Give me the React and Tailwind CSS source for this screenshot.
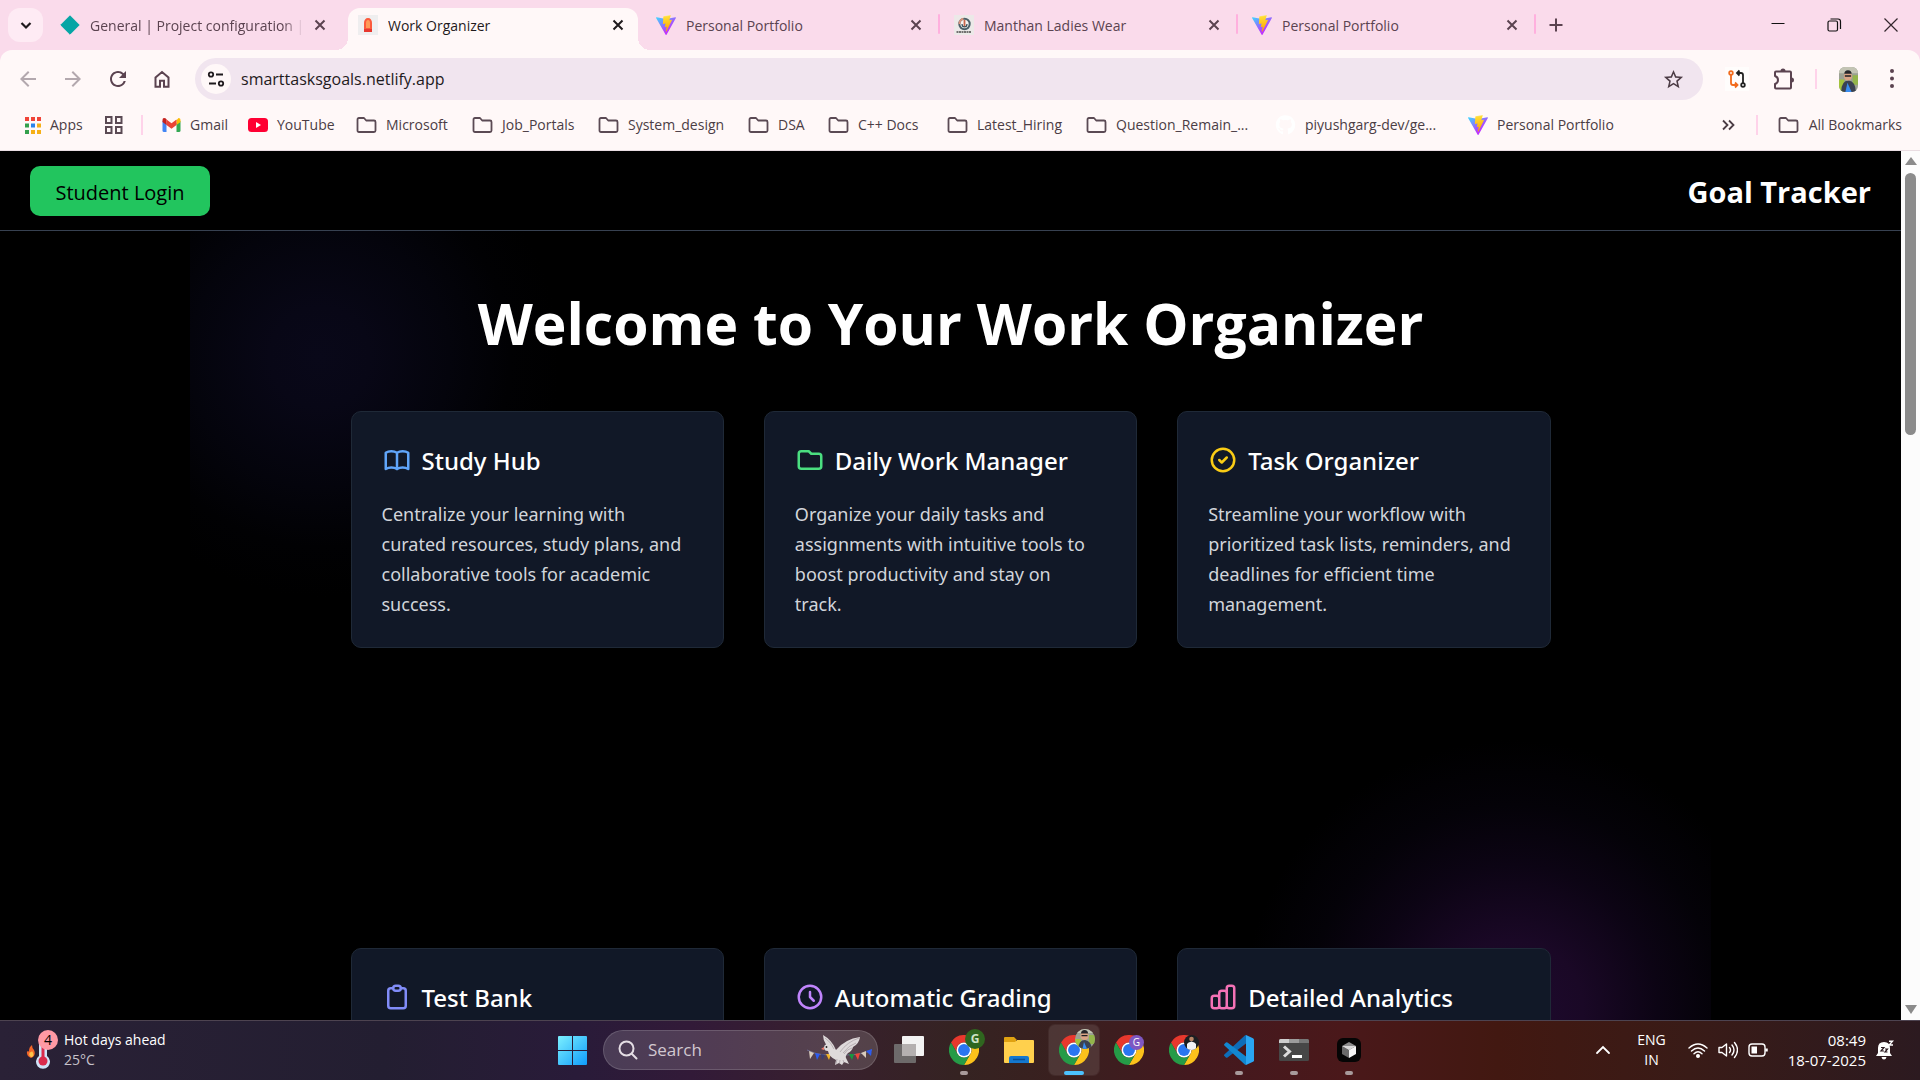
import React from "react";
import { FaGithub } from "react-icons/fa";
import { MdArrowBack, MdArrowForward, MdRefresh, MdStarOutline } from "react-icons/md";

function ViteLogo({ className }) {
  return (
    <svg className={className} viewBox="0 0 256 257" aria-hidden="true">
      <defs>
        <linearGradient id="viteBody" x1="-.8%" x2="57.6%" y1="7.7%" y2="78.4%">
          <stop offset="0" stopColor="#41D1FF" />
          <stop offset="1" stopColor="#BD34FE" />
        </linearGradient>
        <linearGradient id="viteBolt" x1="43.4%" x2="50.3%" y1="2.2%" y2="89%">
          <stop offset="0" stopColor="#FFEA83" />
          <stop offset=".1" stopColor="#FFDD35" />
          <stop offset="1" stopColor="#FFA800" />
        </linearGradient>
      </defs>
      <path fill="url(#viteBody)" d="M255.153 37.938L134.897 252.976c-2.483 4.44-8.862 4.466-11.382.048L.875 37.958c-2.746-4.814 1.371-10.646 6.827-9.67l120.385 21.517a6.537 6.537 0 0 0 2.322-.004l117.867-21.483c5.438-.991 9.574 4.796 6.877 9.62Z" />
      <path fill="url(#viteBolt)" d="M185.432.063L96.44 17.501a3.268 3.268 0 0 0-2.634 3.014l-5.474 92.456a3.268 3.268 0 0 0 3.997 3.378l24.777-5.718c2.318-.535 4.413 1.507 3.936 3.838l-7.361 36.047c-.495 2.426 1.782 4.5 4.151 3.78l15.304-4.649c2.372-.72 4.652 1.36 4.15 3.788l-11.698 56.621c-.732 3.542 3.979 5.473 5.943 2.437l1.313-2.028l72.516-144.72c1.215-2.423-.88-5.186-3.54-4.672l-25.505 4.922c-2.396.462-4.435-1.77-3.759-4.114l16.646-57.705c.677-2.35-1.37-4.583-3.769-4.113Z" />
    </svg>
  );
}

function DiamondIcon({ className }) {
  return (
    <svg className={className} viewBox="0 0 20 20" aria-hidden="true">
      <path d="M10 .8 19.2 10 10 19.2.8 10z" fill="#05a5a5" stroke="#05a5a5" strokeLinejoin="round" />
    </svg>
  );
}

function OrganizerIcon({ className }) {
  return (
    <svg className={className} viewBox="0 0 20 20" aria-hidden="true">
      <rect width="20" height="20" fill="#efeeef" />
      <path d="M6 16V8c0-3 1.500-5 4-5s4 2 4 5v8z" fill="#fb5a3c" />
      <path d="M8 13V8c0-2 .8-3 2-3s2 1 2 3v5z" fill="#ff9a57" />
      <path d="M6 14h8v3H6z" fill="#e8372e" />
    </svg>
  );
}

function WearIcon({ className }) {
  return (
    <svg className={className} viewBox="0 0 20 20" aria-hidden="true">
      <rect width="20" height="20" fill="#ece9e8" />
      <circle cx="10.500" cy="9" r="5.200" fill="#f8f4f2" stroke="#4c6069" strokeWidth="2" />
      <path d="M5.500 9a5 5 0 0 1 4-5.300" fill="none" stroke="#d8937c" strokeWidth="2" />
      <path d="M10.500 5v7" stroke="#c8664a" strokeWidth="1.800" />
      <path d="M8 9q0 3 2.500 3T13 9" fill="none" stroke="#37505b" strokeWidth="1.200" />
      <path d="M2.500 17h15" stroke="#4a4a4a" strokeWidth="1.500" strokeDasharray="2 .5" />
    </svg>
  );
}

function FolderLine() {
  return (
    <svg className="h-5 w-[21px] shrink-0" viewBox="0 0 21 20" fill="none" stroke="#5b4a54" strokeWidth="1.800" strokeLinejoin="round" aria-hidden="true">
      <path d="M1.500 4.500q0-1.500 1.500-1.500h5l2.200 2.500H18q1.500 0 1.500 1.500v8.500q0 1.500-1.500 1.500H3q-1.500 0-1.500-1.500z" />
    </svg>
  );
}

function AppsDots() {
  const colors = ["#f04438", "#f04438", "#f04438", "#34a04c", "#2b83ea", "#f6b017", "#34a04c", "#f6b017", "#f6b017"];
  return (
    <svg className="h-5 w-4 shrink-0" viewBox="0 0 16 20" aria-hidden="true">
      {colors.map((c, i) => (
        <rect key={i} x={(i % 3) * 6} y={2 + Math.floor(i / 3) * 6.500} width="4" height="4" fill={c} />
      ))}
    </svg>
  );
}

function GmailIcon() {
  return (
    <svg className="h-5 w-[19px] shrink-0" viewBox="0 0 19 20" aria-hidden="true">
      <path d="M.5 6v9.500q0 1.500 1.500 1.500h2.500V8z" fill="#4285f4" />
      <path d="M18.500 6v9.500q0 1.500-1.500 1.500h-2.500V8z" fill="#34a853" />
      <path d="M14.500 5.200V10l4-3V5q0-2-2-2z" fill="#fbbc04" />
      <path d="M4.500 10V4.500l5 3.800 5-3.800V10l-5 3.800z" fill="#ea4335" />
      <path d="M.5 5v2l4 3V4.500L3.500 3.300Q.5 2 .5 5z" fill="#c5221f" />
    </svg>
  );
}

function YouTubeIcon() {
  return (
    <svg className="h-5 w-5 shrink-0" viewBox="0 0 20 20" aria-hidden="true">
      <rect y="3" width="20" height="14" rx="3.500" fill="#ff0033" />
      <path d="m8 7 5 3-5 3z" fill="#fff" />
    </svg>
  );
}

function Avatar({ className }) {
  return (
    <svg className={className} viewBox="0 0 20 24" preserveAspectRatio="xMidYMid slice" aria-hidden="true">
      <rect width="20" height="24" fill="#9ba193" />
      <path d="M0 0h20v6H0z" fill="#c3c4b4" />
      <path d="M0 12h6v12H0z" fill="#a3c33c" />
      <path d="M14 8h6v9h-6z" fill="#93b54a" />
      <path d="M3 24q0-11 7-11 7 1 7 11z" fill="#3b4251" />
      <path d="m9 15 4 9H7z" fill="#3a8df0" />
      <circle cx="9.500" cy="9" r="4" fill="#d9a485" />
      <path d="M6 6.500Q6 3 9.500 3T13 6.500z" fill="#25262b" />
      <path d="M6.500 8h6v1.300h-6z" fill="#1e1f25" />
    </svg>
  );
}

function ChromeLogo({ className }) {
  const sector = "M3.200 12A24 24 0 0 1 44.800 12L24 12A12 12 0 0 0 13.600 30Z";
  return (
    <svg className={className} viewBox="0 0 48 48" aria-hidden="true">
      <path d={sector} fill="#e8382d" />
      <path d={sector} fill="#fcc21b" transform="rotate(120 24 24)" />
      <path d={sector} fill="#259b47" transform="rotate(240 24 24)" />
      <circle cx="24" cy="24" r="12" fill="#fff" />
      <circle cx="24" cy="24" r="9.500" fill="#2a75f0" />
    </svg>
  );
}

function CloseX({ active }) {
  return (
    <svg className="h-5 w-5" viewBox="0 0 20 20" fill="none" stroke={active ? "#1f1a1d" : "#5b4350"} strokeWidth="2" aria-hidden="true">
      <path d="m5.500 5.500 9 9m0-9-9 9" />
    </svg>
  );
}

const tabs = [
  { title: "General | Project configuration |", Icon: DiamondIcon, fade: true },
  { title: "Work Organizer", Icon: OrganizerIcon, active: true },
  { title: "Personal Portfolio", Icon: ViteLogo, line: true },
  { title: "Manthan Ladies Wear", Icon: WearIcon, line: true },
  { title: "Personal Portfolio", Icon: ViteLogo, line: true },
];

function TabTitle({ title, active, fade }) {
  if (active) return <span className="flex-1 truncate text-[#1f1a1d]">{title}</span>;
  if (fade) return <span className="whitespace-nowrap text-[#5b4350] mask-r-from-90%">{title}</span>;
  return <span className="flex-1 truncate text-[#5b4350]">{title}</span>;
}

function TabStrip() {
  return (
    <div className="flex h-[50px] shrink-0 bg-[#fadbeb]">
      <button aria-label="Search tabs" className="mt-2 ml-2 flex h-[34px] w-[35px] shrink-0 items-center justify-center rounded-xl bg-[#feebf4]">
        <svg className="h-5 w-5" viewBox="0 0 20 20" fill="none" stroke="#1f1a1d" strokeWidth="2.200" aria-hidden="true">
          <path d="m5.500 8 4.500 4.500L14.500 8" />
        </svg>
      </button>
      <div className="ml-[3px] flex min-w-0 flex-1 pr-10" role="tablist">
        {tabs.map(({ title, Icon, active, line, fade }, i) => (
          <div key={i} className="relative h-full min-w-0 max-w-[298px] flex-1" role="presentation">
            {active && (
              <div className="absolute inset-x-1 top-2 bottom-0 rounded-t-xl bg-[#fff8f8]">
                <div className="absolute bottom-0 -left-3 h-3 w-3 bg-[radial-gradient(circle_at_0_0,transparent_12px,#fff8f8_12px)]" />
                <div className="absolute -right-3 bottom-0 h-3 w-3 bg-[radial-gradient(circle_at_100%_0,transparent_12px,#fff8f8_12px)]" />
              </div>
            )}
            <div className="relative flex h-full items-center pr-[14px] pl-[14px]">
              <button role="tab" aria-selected={!!active} className="flex min-w-0 flex-1 items-center gap-[10px] text-left">
                <Icon className="h-5 w-5 shrink-0" />
                <TabTitle title={title} active={active} fade={fade} />
              </button>
              <button aria-label={"Close " + title} className="ml-2 shrink-0">
                <CloseX active={active} />
              </button>
              {line && <div className="absolute top-[14px] right-0 h-5 w-[2px] rounded bg-[#ffb0de]" />}
            </div>
          </div>
        ))}
        <button aria-label="New tab" className="ml-[10px] flex w-5 shrink-0 items-center justify-center">
          <svg className="h-5 w-5" viewBox="0 0 20 20" stroke="#5b4350" strokeWidth="2" aria-hidden="true">
            <path d="M10 3.500v13M3.500 10h13" />
          </svg>
        </button>
      </div>
      <div className="flex shrink-0">
        <button aria-label="Minimize" className="flex w-14 items-center justify-center">
          <svg className="h-5 w-5" viewBox="0 0 20 20" stroke="#111" aria-hidden="true"><path d="M3.500 8.500h13" /></svg>
        </button>
        <button aria-label="Restore" className="flex w-14 items-center justify-center">
          <svg className="h-5 w-5" viewBox="0 0 20 20" fill="none" stroke="#111" strokeWidth="1.200" aria-hidden="true">
            <rect x="4" y="6" width="9.500" height="10" rx="1.500" />
            <path d="M6.500 4h7.500q2.500 0 2.500 2.500V14" />
          </svg>
        </button>
        <button aria-label="Close window" className="flex w-[58px] items-center justify-center">
          <svg className="h-5 w-5" viewBox="0 0 20 20" fill="none" stroke="#33262d" strokeWidth="1.200" aria-hidden="true"><path d="m3.500 3.500 13 13m0-13-13 13" /></svg>
        </button>
      </div>
    </div>
  );
}

function Toolbar() {
  return (
    <div className="bg-[#fadbeb]">
      <div className="flex h-[58px] items-center rounded-t-xl bg-[#fff8f8] pr-4 pl-[6px] text-[#5b4350]">
        <div className="flex items-center">
          <button aria-label="Back" className="flex w-11 justify-center text-[#b3a8ae]"><MdArrowBack className="h-6 w-6" /></button>
          <button aria-label="Forward" className="flex w-[45px] justify-center text-[#b3a8ae]"><MdArrowForward className="h-6 w-6" /></button>
          <button aria-label="Reload" className="flex w-[45px] justify-center"><MdRefresh className="h-6 w-6" /></button>
          <button aria-label="Home" className="flex w-11 justify-center">
            <svg className="h-5 w-5" viewBox="0 0 20 20" fill="none" stroke="currentColor" strokeWidth="2" aria-hidden="true">
              <path d="M3.500 8.500 10 3l6.500 5.500v9.200H12v-6H8v6H3.500z" />
            </svg>
          </button>
        </div>
        <form className="ml-[11px] flex h-[42px] min-w-0 flex-1 items-center rounded-full bg-[#f1e5ef] px-[6px]">
          <button type="button" aria-label="Site information" className="flex h-[30px] w-[30px] shrink-0 items-center justify-center rounded-full bg-[#fff8f8]">
            <svg className="h-5 w-5" viewBox="0 0 20 20" fill="none" stroke="#1f1a1d" strokeWidth="1.800" aria-hidden="true">
              <circle cx="5" cy="5.500" r="2.200" />
              <path d="M10 5.500h7M3 14.500h7" />
              <circle cx="15" cy="14.500" r="2.200" />
            </svg>
          </button>
          <input aria-label="Address" defaultValue="smarttasksgoals.netlify.app" className="ml-[10px] min-w-0 flex-1 bg-transparent text-[16px] text-[#1f1a1d] outline-none" />
          <button type="button" aria-label="Bookmark this page" className="mr-[12px] text-[#4c3c45]"><MdStarOutline className="h-[23px] w-[23px]" /></button>
        </form>
        <div className="ml-[22px] flex items-center">
          <button aria-label="Compare extension" className="flex h-6 w-6 items-center justify-center bg-[#fffdfc]">
            <svg className="h-5 w-5" viewBox="0 0 20 20" fill="none" strokeWidth="1.800" aria-hidden="true">
              <g stroke="#f26b1d">
                <circle cx="4" cy="4" r="1.800" />
                <path d="M4 6v8q0 2 2 2h4M8 13.500l2.500 2.500L8 18.500" />
              </g>
              <g stroke="#222">
                <circle cx="16" cy="16" r="1.800" />
                <path d="M16 14V6q0-2-2-2h-3.500M12.500 1.500 10 4l2.500 2.500" />
              </g>
            </svg>
          </button>
          <button aria-label="Extensions" className="ml-[22px]">
            <svg className="h-6 w-6" viewBox="0 0 24 24" fill="none" aria-hidden="true">
              <path d="M4 5.500q0-1 1-1h14q1 0 1 1v15q0 1-1 1H5q-1 0-1-1V17q3-1 3-4T4 9z" stroke="#5b4350" strokeWidth="2" strokeLinejoin="round" />
              <path d="M9.500 4a2.500 2.500 0 0 1 5 0zM20.500 10.500a2.500 2.500 0 0 1 0 5z" fill="#5b4350" />
            </svg>
          </button>
          <div className="ml-[20px] h-5 w-[2px] bg-[#ffd3ea]" />
          <button aria-label="Profile" className="ml-[22px] h-[25px] w-[19px] overflow-hidden rounded-md"><Avatar className="h-full w-full" /></button>
          <button aria-label="Browser menu" className="ml-[22px]">
            <svg className="h-6 w-6" viewBox="0 0 24 24" fill="#5b4350" aria-hidden="true">
              <circle cx="12" cy="4" r="2" /><circle cx="12" cy="11.500" r="2" /><circle cx="12" cy="19" r="2" />
            </svg>
          </button>
        </div>
      </div>
    </div>
  );
}

const bookmarks = [
  { label: "Gmail", icon: <GmailIcon />, w: "w-[86px]" },
  { label: "YouTube", icon: <YouTubeIcon />, w: "w-[108px]" },
  { label: "Microsoft", w: "w-[116px]" },
  { label: "Job_Portals", w: "w-[126px]" },
  { label: "System_design", w: "w-[150px]" },
  { label: "DSA", w: "w-[80px]" },
  { label: "C++ Docs", w: "w-[119px]" },
  { label: "Latest_Hiring", w: "w-[139px]" },
  { label: "Question_Remain_...", w: "w-[189px]" },
  { label: "piyushgarg-dev/ge...", icon: <FaGithub className="h-5 w-[21px] shrink-0 text-white" />, w: "w-[193px]" },
  { label: "Personal Portfolio", icon: <ViteLogo className="h-5 w-5 shrink-0" />, w: "w-[150px]" },
];

function BookmarkBar() {
  return (
    <nav aria-label="Bookmarks" className="flex h-[43px] shrink-0 items-center border-b border-[#e9dde2] bg-[#fff8f8] pr-[18px] pb-[9px] pl-[25px] whitespace-nowrap text-[#4b3d45]">
      <a href="#apps" className="flex w-[79px] items-center gap-[9px]"><AppsDots />Apps</a>
      <button aria-label="Tab groups">
        <svg className="h-5 w-5" viewBox="0 0 20 20" fill="none" stroke="#5b4a54" strokeWidth="2" aria-hidden="true">
          <rect x="2" y="2" width="5.500" height="6" /><rect x="12" y="2" width="5.500" height="6" />
          <rect x="2" y="12" width="5.500" height="6" /><rect x="12" y="12" width="5.500" height="6" />
        </svg>
      </button>
      <div className="mr-[19px] ml-[17px] h-5 w-[2px] shrink-0 bg-[#ffd3ea]" />
      <div className="flex min-w-0 flex-1 overflow-hidden">
        {bookmarks.map((b, i) => (
          <a key={i} href={"#bookmark-" + i} className={"flex shrink-0 items-center gap-[9px] " + b.w}>
            {b.icon || <FolderLine />}
            {b.label}
          </a>
        ))}
      </div>
      <button aria-label="More bookmarks">
        <svg className="h-5 w-5" viewBox="0 0 20 20" fill="none" stroke="#4b3d45" strokeWidth="1.800" aria-hidden="true">
          <path d="m4 5.500 4.500 4.500L4 14.500m6-9 4.500 4.500-4.500 4.500" />
        </svg>
      </button>
      <div className="mr-[20px] ml-[17px] h-5 w-[2px] shrink-0 bg-[#ffd3ea]" />
      <button className="flex items-center gap-[10px]"><FolderLine />All Bookmarks</button>
    </nav>
  );
}

const features = [
  {
    title: "Study Hub",
    color: "text-[#60a5fa]",
    text: "Centralize your learning with curated resources, study plans, and collaborative tools for academic success.",
    d: "M12 6.253v13m0-13C10.832 5.477 9.246 5 7.5 5S4.168 5.477 3 6.253v13C4.168 18.477 5.754 18 7.5 18s3.332.477 4.5 1.253m0-13C13.168 5.477 14.754 5 16.5 5c1.747 0 3.332.477 4.5 1.253v13C19.832 18.477 18.247 18 16.5 18c-1.746 0-3.332.477-4.5 1.253",
  },
  {
    title: "Daily Work Manager",
    color: "text-[#4ade80]",
    text: "Organize your daily tasks and assignments with intuitive tools to boost productivity and stay on track.",
    d: "M3 7v10a2 2 0 002 2h14a2 2 0 002-2V9a2 2 0 00-2-2h-6l-2-2H5a2 2 0 00-2 2z",
  },
  {
    title: "Task Organizer",
    color: "text-[#facc15]",
    text: "Streamline your workflow with prioritized task lists, reminders, and deadlines for efficient time management.",
    d: "M9 12l2 2 4-4m6 2a9 9 0 11-18 0 9 9 0 0118 0z",
  },
  {
    title: "Test Bank",
    color: "text-[#818cf8]",
    text: "",
    d: "M9 5H7a2 2 0 00-2 2v12a2 2 0 002 2h10a2 2 0 002-2V7a2 2 0 00-2-2h-2M9 5a2 2 0 002 2h2a2 2 0 002-2M9 5a2 2 0 012-2h2a2 2 0 012 2",
  },
  {
    title: "Automatic Grading",
    color: "text-[#c084fc]",
    text: "",
    d: "M12 8v4l3 3m6-3a9 9 0 11-18 0 9 9 0 0118 0z",
  },
  {
    title: "Detailed Analytics",
    color: "text-[#f472b6]",
    text: "",
    d: "M9 19v-6a2 2 0 00-2-2H5a2 2 0 00-2 2v6a2 2 0 002 2h2a2 2 0 002-2zm0 0V9a2 2 0 012-2h2a2 2 0 012 2v10m-6 0a2 2 0 002 2h2a2 2 0 002-2m0 0V5a2 2 0 012-2h2a2 2 0 012 2v14a2 2 0 01-2 2h-2a2 2 0 01-2-2z",
  },
];

function FeatureCard({ title, color, text, d }) {
  return (
    <article className="min-h-[237px] rounded-[10px] border border-[#1f2937] bg-[#111827] px-[30px] pt-[30px] pb-7 font-['Noto_Sans','Open_Sans',sans-serif]">
      <div className="mb-[22px] flex items-center gap-[10px]">
        <svg className={"h-[30px] w-[30px] shrink-0 " + color} viewBox="0 0 24 24" fill="none" stroke="currentColor" strokeWidth="2" strokeLinecap="round" strokeLinejoin="round" aria-hidden="true">
          <path d={d} />
        </svg>
        <h2 className="pt-[2px] text-[24px] leading-[33px] font-medium whitespace-nowrap text-white">{title}</h2>
      </div>
      <p className="pr-[6px] text-[18px] leading-[30px] text-[#d1d5db]">{text}</p>
    </article>
  );
}

function Page() {
  return (
    <div className="flex min-h-0 flex-1 bg-black">
      <div className="relative min-w-0 flex-1 overflow-hidden">
        <header className="relative flex h-20 items-center justify-between border-b border-[#374151] bg-black px-[30px]">
          <button className="h-[50px] w-[180px] rounded-[10px] bg-[#22c55e] pt-1 text-[20px] text-black">Student Login</button>
          <span className="pt-[2px] text-[29px] font-bold text-white">Goal Tracker</span>
        </header>
        <div className="absolute top-20 left-[10%] h-[420px] w-[400px] bg-[radial-gradient(circle_at_130px_126px,#090819_0,#080716_50px,#04040c_130px,#010103_190px,transparent_240px)]" />
        <div className="absolute right-[10%] bottom-0 h-[290px] w-[480px] bg-[radial-gradient(circle_at_282px_280px,#1e0a2e_0,#1a0826_70px,#0c0414_145px,#040208_205px,transparent_270px)]" />
        <main className="relative flex flex-col items-center pt-[62px]">
          <h1 className="mb-[58px] text-[57px] leading-[60px] font-bold text-white">Welcome to Your Work Organizer</h1>
          <div className="grid w-full max-w-[1200px] grid-cols-3 gap-x-10 gap-y-[300px]">
            {features.map((f) => <FeatureCard key={f.title} {...f} />)}
          </div>
        </main>
      </div>
      <div className="flex w-[19px] shrink-0 flex-col items-center bg-[#fcfcfc] py-[6px]" aria-hidden="true">
        <svg className="h-2 w-3" viewBox="0 0 12 8"><path d="M6 0 12 8H0z" fill="#8b8b8b" /></svg>
        <div className="mt-2 h-[262px] w-[11px] rounded-full bg-[#8b8b8b]" />
        <svg className="mt-auto h-[9px] w-3" viewBox="0 0 12 9"><path d="M0 0h12L6 9z" fill="#8b8b8b" /></svg>
      </div>
    </div>
  );
}

function Dove() {
  return (
    <svg className="h-[35px] w-[68px] shrink-0" viewBox="0 0 68 35" aria-hidden="true">
      <path d="M1 17q16 8 32 3M40 22q16 0 26-5" fill="none" stroke="#6d6a8c" />
      <path d="m3 18 5 2-4 6z" fill="#d9cdbd" />
      <path d="m9 20 5 1-3 6z" fill="#2c5cf0" />
      <path d="m15 21 4 1-3 5z" fill="#363e75" />
      <path d="m20 21 5 0-2 6z" fill="#f1b528" />
      <path d="m43 21 5 0-2 6z" fill="#17993f" />
      <path d="m49 21 5-1-2 7z" fill="#ee4439" />
      <path d="m55 20 5-2v7z" fill="#d9cdbd" />
      <path d="m60 18 6-2-1 7z" fill="#2c5cf0" />
      <path d="M17 2Q26 7 30 17 39 6 54 4 53 11 47 14 46 18 42 20 39 23 40 25L43 31 38 29 36 32 33 30 29 32 30 27Q23 24 22 18 18 18 18 14.500 18 12 20 11.500 17 7 17 2Z" fill="#dfdadb" />
      <path d="M53 5Q41 9 34 19M50 10Q43 12 37 20M46 15Q41 16 38 21M19 5Q25 9 28 16" fill="none" stroke="#aea6ab" strokeWidth=".8" />
      <path d="m31 26-1 5m4-4-.5 3m3.500-3 1 3" stroke="#a39ca2" strokeWidth=".7" />
      <path d="m18 14-3 2 3 1z" fill="#ef7c6c" />
      <circle cx="20.500" cy="14" r=".9" fill="#222" />
    </svg>
  );
}

function TaskIcon({ label, children, run, active }) {
  return (
    <button aria-label={label} className={active ? "relative flex h-[50px] w-[50px] items-center justify-center rounded-md bg-white/10 ring-1 ring-white/5" : "relative flex h-[50px] w-[50px] items-center justify-center"}>
      {children}
      {run && !active && <span className="absolute bottom-0 h-1 w-2 rounded-full bg-[#a89a9b]" />}
      {active && <span className="absolute bottom-0 h-1 w-5 rounded-full bg-[#4cc2ff]" />}
    </button>
  );
}

function Taskbar() {
  return (
    <footer className="relative flex h-[60px] shrink-0 items-center justify-between border-t border-[#4d4350] bg-[linear-gradient(90deg,#2a2136_0,#231e31_20%,#291b39_30%,#321a38_36%,#38202e_43%,#352322_50%,#39201f_55%,#43191f_62%,#4a181a_70%,#421811_78%,#391b17_88%,#2c1a20_100%)] text-white">
      <button className="flex items-center pb-[2px] pl-[26px] text-left">
        <span className="relative mr-[10px] block h-10 w-7">
          <svg className="h-10 w-7" viewBox="0 0 28 40" aria-hidden="true">
            <path d="M5 28q-5-2-4-7 1 1 2 0 0-4 3-6 0 3 2 5 2 4-1 7z" fill="#f4672a" />
            <path d="M5 27q-3-2-1-5 1 1 2-1 3 4 0 6z" fill="#ffc34a" />
            <path d="M13 8q0-4 4-4t4 4v18a7 7 0 1 1-8 0z" fill="#cfe3f8" />
            <path d="M15.500 14h3v14h-3z" fill="#d92b4c" />
            <circle cx="17" cy="31" r="4.500" fill="#d92b4c" />
          </svg>
          <span className="absolute top-0 left-3 flex h-5 w-5 items-center justify-center rounded-full bg-[#ff99a4] text-[14px] text-black">4</span>
        </span>
        <span className="flex flex-col text-[14px] leading-5">
          <span>Hot days ahead</span>
          <span className="text-[#c7c2ca]">25°C</span>
        </span>
      </button>
      <div className="absolute top-1 left-[558px] flex h-[50px] items-center">
        <button aria-label="Start">
          <svg className="h-[29px] w-[29px]" viewBox="0 0 29 29" aria-hidden="true">
            <defs>
              <linearGradient id="win" x1="0" y1="0" x2="1" y2="1">
                <stop offset="0" stopColor="#7cf0ff" /><stop offset="1" stopColor="#0f9cfb" />
              </linearGradient>
            </defs>
            <path fill="url(#win)" d="M0 1q0-1 1-1h13v14H0zM15 0h13q1 0 1 1v13H15zM0 15h14v14H1q-1 0-1-1zM15 15h14v13q0 1-1 1H15z" />
          </svg>
        </button>
        <label className="ml-4 flex h-10 w-[275px] items-center rounded-full border border-white/15 bg-white/15 pr-[3px] pl-[14px]">
          <svg className="h-5 w-5 shrink-0" viewBox="0 0 20 20" fill="none" stroke="#e4dde4" strokeWidth="2" strokeLinecap="round" aria-hidden="true">
            <circle cx="8.500" cy="8.500" r="7" /><path d="m14 14 4.500 4.500" />
          </svg>
          <input aria-label="Search" placeholder="Search" className="ml-[10px] min-w-0 flex-1 bg-transparent text-[17px] placeholder-[#d2c8d0] outline-none" />
          <Dove />
        </label>
        <div className="ml-[6px] flex gap-[5px]">
          <TaskIcon label="Task view">
            <svg className="h-[30px] w-[30px]" viewBox="0 0 30 30" aria-hidden="true">
              <rect x="8" y="1" width="22" height="20" rx="1" fill="#f3f3f3" />
              <rect y="9" width="22" height="19" rx="1" fill="#777" fillOpacity=".85" />
              <path d="M8 9h14v12H8z" fill="#b4b0b0" />
            </svg>
          </TaskIcon>
          <TaskIcon label="Chrome profile G" run>
            <ChromeLogo className="h-[30px] w-[30px]" />
            <span className="absolute top-1 right-1 flex h-5 w-5 items-center justify-center rounded-full bg-[#2f661f] text-[12px] font-bold text-[#cfe3c8]">G</span>
          </TaskIcon>
          <TaskIcon label="File Explorer">
            <svg className="h-[30px] w-[30px]" viewBox="0 0 30 30" aria-hidden="true">
              <path d="M0 3q0-1 1-1h9l3 3h-1v5H0z" fill="#e0a211" />
              <path d="M0 7h11l2-2h16q1 0 1 1v21q0 1-1 1H1q-1 0-1-1z" fill="#ffd04d" />
              <path d="M5 28v-5q0-2 2-2h16q2 0 2 2v5z" fill="#1478cf" />
              <path d="M9 24.500h12" stroke="#0b4f93" strokeWidth="1.500" />
            </svg>
          </TaskIcon>
          <TaskIcon label="Chrome, current window" active>
            <ChromeLogo className="h-[30px] w-[30px]" />
            <Avatar className="absolute top-1 right-1 h-5 w-5 rounded-full" />
          </TaskIcon>
          <TaskIcon label="Chrome work profile">
            <ChromeLogo className="h-[30px] w-[30px]" />
            <span className="absolute top-[10px] right-[10px] flex h-[15px] w-[15px] items-center justify-center rounded-full bg-[#7e57c2] text-[10px] text-white">G</span>
          </TaskIcon>
          <TaskIcon label="Chrome personal profile">
            <ChromeLogo className="h-[30px] w-[30px]" />
            <svg className="absolute top-[10px] right-[10px] h-[15px] w-[15px] rounded-full bg-[#1b1e22]" viewBox="0 0 15 15" aria-hidden="true">
              <circle cx="7.500" cy="4" r="2.300" fill="#b98566" />
              <path d="M3 15V9q1-2 4.500-2.500Q11 7 12 9v6z" fill="#f2f2f4" />
            </svg>
          </TaskIcon>
          <TaskIcon label="Visual Studio Code" run>
            <svg className="h-[30px] w-[30px]" viewBox="0 0 30 30" aria-hidden="true">
              <path d="m22 0 7 3.200q1 .5 1 1.600v20.400q0 1.100-1 1.600L22 30z" fill="#2aa6f2" />
              <path d="M22 8.500 3.500 22.500q-.8.600-1.600 0L.4 21q-.8-.8 0-1.500L20.500.7Q21.200 0 22 0z" fill="#0e6db8" />
              <path d="M22 21.500 3.500 7.500q-.8-.6-1.600 0L.4 9q-.8.800 0 1.500l20.100 18.800q.7.700 1.500.7z" fill="#1287d0" />
            </svg>
          </TaskIcon>
          <TaskIcon label="Terminal" run>
            <svg className="h-[30px] w-[30px]" viewBox="0 0 30 30" aria-hidden="true">
              <rect y="4" width="30" height="22" rx="1.500" fill="#474747" />
              <path d="M0 5.500Q0 4 1.500 4H10v4H0z" fill="#cfcfcf" />
              <path d="M10 4h10v4H10z" fill="#9c9c9c" />
              <path d="M20 4h8.500Q30 4 30 5.500V8H20z" fill="#777" />
              <path d="m5 11.500 5.500 5-5.500 5" fill="none" stroke="#dcdcdc" strokeWidth="3" />
              <path d="M13 21.500h10" stroke="#fff" strokeWidth="3" />
            </svg>
          </TaskIcon>
          <TaskIcon label="Cursor" run>
            <svg className="h-6 w-6" viewBox="0 0 24 24" aria-hidden="true">
              <rect width="24" height="24" rx="6" fill="#050505" />
              <path d="m12 4 7 4-7 4-7-4z" fill="#8c8c8c" />
              <path d="m5 8 7 4v8l-7-4z" fill="#6a6a6a" />
              <path d="M19 8v8l-7 4v-8z" fill="#f4f4f4" />
              <path d="M5 8h14l-7 4z" fill="#d8d8d8" />
            </svg>
          </TaskIcon>
        </div>
      </div>
      <div className="flex items-center pr-[26px] pb-[2px] text-[14px] leading-5">
        <button aria-label="Show hidden icons" className="mr-[26px]">
          <svg className="h-4 w-4" viewBox="0 0 16 16" fill="none" stroke="#fff" strokeWidth="1.800" strokeLinecap="round" aria-hidden="true"><path d="m2 11 6-6 6 6" /></svg>
        </button>
        <button className="mr-[22px] flex flex-col items-center"><span>ENG</span><span>IN</span></button>
        <button aria-label="Network, volume and battery" className="mr-[20px] flex items-center gap-[10px]">
          <svg className="h-5 w-5" viewBox="0 0 20 20" fill="none" stroke="#fff" strokeWidth="1.400" strokeLinecap="round" aria-hidden="true">
            <path d="M1 8q9-8 18 0M3.500 11q6.500-6 13 0M6 13.800q4-4 8 0" />
            <circle cx="10" cy="16" r="1.300" fill="#fff" />
          </svg>
          <svg className="h-5 w-5" viewBox="0 0 20 20" fill="none" stroke="#fff" strokeWidth="1.400" strokeLinecap="round" strokeLinejoin="round" aria-hidden="true">
            <path d="M1 7.500h3L8.500 4v12L4 12.500H1zM11.500 7.500q2 2.500 0 5M14 5q4 5 0 10M16.500 2.500q6 7.500 0 15" />
          </svg>
          <svg className="h-5 w-5" viewBox="0 0 20 20" fill="none" stroke="#fff" strokeWidth="1.400" aria-hidden="true">
            <rect x="1" y="4" width="16" height="12" rx="3" />
            <rect x="3.500" y="6.500" width="5.500" height="7" fill="#fff" stroke="none" />
            <path d="M18.500 8.500v3" strokeWidth="2.500" />
          </svg>
        </button>
        <button className="mr-[10px] flex flex-col items-end text-[15px]"><span>08:49</span><span>18-07-2025</span></button>
        <button aria-label="Notifications snoozed">
          <svg className="h-5 w-[18px]" viewBox="0 0 18 20" aria-hidden="true">
            <path d="M8 2q6 0 6 6v5l2 3H0l2-3V8q0-6 6-6z" fill="#fff" />
            <path d="M5.500 17h5q-.5 2.500-2.500 2.500T5.500 17z" fill="#fff" />
            <path d="M5 7.500h3L5 11h3M9 9h2.500L9 12h2.500" fill="none" stroke="#2c1a20" strokeWidth="1.200" />
            <path d="M11 0h7v6h-4z" fill="#2f1b20" />
            <path d="M13 1.200h3.500L13.200 5H17" fill="none" stroke="#fff" strokeWidth="1.400" />
          </svg>
        </button>
      </div>
    </footer>
  );
}

export default function App() {
  return (
    <div className="flex h-screen flex-col overflow-hidden font-['Open_Sans','Noto_Sans',sans-serif] text-[14px]">
      <TabStrip />
      <Toolbar />
      <BookmarkBar />
      <Page />
      <Taskbar />
    </div>
  );
}
